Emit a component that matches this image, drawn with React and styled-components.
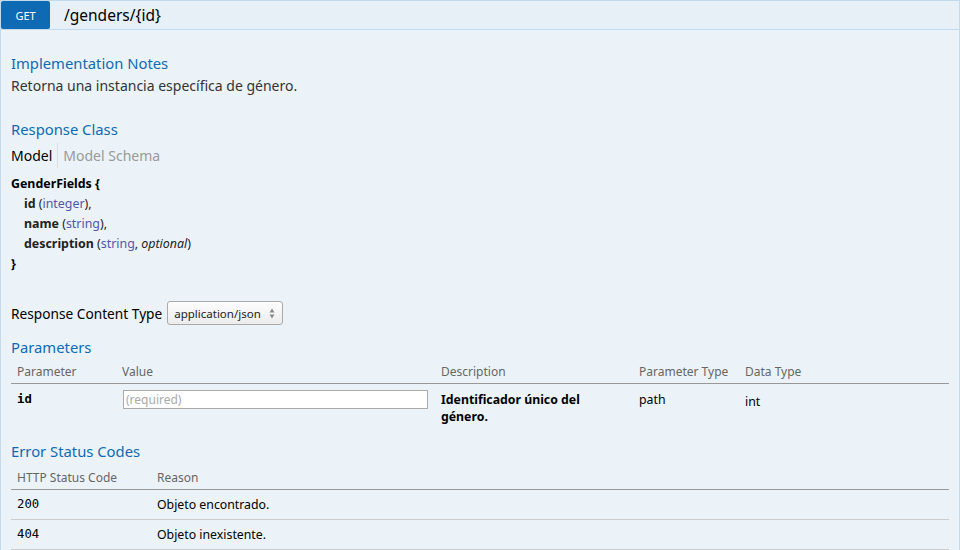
import React from 'react'
import styled, { createGlobalStyle } from 'styled-components'

const GlobalStyle = createGlobalStyle`
  html, body {
    margin: 0;
    padding: 0;
    background: #ffffff;
  }
  body {
    font-family: 'Noto Sans', 'Open Sans', sans-serif;
    color: #222;
  }
`

const Operation = styled.div`
  width: 960px;
  height: 550px;
  box-sizing: border-box;
  overflow: hidden;
  background: #ebf3f9;
  border: 1px solid #c3d9ec;
  border-bottom: none;
`

const Heading = styled.div`
  display: flex;
  align-items: center;
  height: 28px;
  background: #e7f0f7;
  border-bottom: 1px solid #c3d9ec;
`

const Method = styled.span`
  display: flex;
  align-items: center;
  justify-content: center;
  width: 49px;
  height: 28px;
  background: #0f6ab4;
  color: #fff;
  font-size: 11px;
  border-radius: 2px;
  text-transform: uppercase;
`

const Path = styled.span`
  margin-left: 14px;
  font-size: 15.5px;
  color: #000;
`

const Content = styled.div`
  padding: 0 10px;
`

const Title = styled.h4`
  margin: ${p => p.$top}px 0 ${p => p.$bottom || 0}px;
  font-size: 14.8px;
  line-height: 20px;
  font-weight: normal;
  color: #0f6ab4;
`

const Notes = styled.p`
  margin: 3px 0 0;
  font-size: 14px;
  line-height: 20px;
  color: #333;
`

const Tabs = styled.div`
  display: flex;
  margin-top: 4px;
`

const Tab = styled.span`
  font-size: 14px;
  line-height: 25px;
  padding: ${p => (p.$active ? '0 5px 0 0' : '0 0 0 5px')};
  color: ${p => (p.$active ? '#000' : '#999')};
  border-left: ${p => (p.$active ? 'none' : '1px solid #ddd')};
`

const Model = styled.div`
  margin-top: 6px;
  font-size: 12.4px;
  line-height: 20px;
  color: #222;
`

const ModelName = styled.div`
  font-weight: bold;
  color: #000;
`

const Prop = styled.div`
  padding-left: 13px;
  & b {
    color: #222;
  }
`

const PropType = styled.span`
  color: #55a;
`

const ContentTypeRow = styled.div`
  display: flex;
  align-items: center;
  margin-top: 27px;
  font-size: 13.7px;
  color: #000;
`

const Select = styled.div`
  display: flex;
  align-items: center;
  justify-content: space-between;
  box-sizing: border-box;
  width: 116px;
  height: 24px;
  margin-left: 5px;
  padding: 0 7px 0 6px;
  font-size: 11.5px;
  color: #222;
  background: linear-gradient(#fdfdfd, #ececec);
  border: 1px solid #aaa;
  border-radius: 3px;
`

const Table = styled.table`
  width: 100%;
  border-collapse: collapse;
  table-layout: fixed;
  margin-top: ${p => p.$top}px;
`

const Th = styled.th`
  text-align: left;
  font-weight: normal;
  font-size: 12px;
  color: #666;
  padding: 4px 6px 4px;
  line-height: 15px;
  border-bottom: 1px solid #999;
`

const Td = styled.td`
  vertical-align: top;
  padding: ${p => p.$pad || '7px 6px 6px'};
  font-size: 12.3px;
  line-height: 17px;
  color: #000;
  border-bottom: ${p => (p.$line ? '1px solid #ccc' : 'none')};
  font-family: ${p => (p.$code ? "'DejaVu Sans Mono', monospace" : 'inherit')};
  font-weight: ${p => (p.$bold ? 'bold' : 'normal')};
`

const Input = styled.input`
  box-sizing: border-box;
  width: 305px;
  height: 19px;
  margin: -1px 0 0 1px;
  padding: 0 2px;
  font-family: 'Noto Sans', sans-serif;
  font-size: 12px;
  border: 1px solid #aaa;
  background: #fff;
  &::placeholder {
    color: #aaa;
  }
`

const SelectArrows = () => (
  <svg width="6" height="11" viewBox="0 0 6 11">
    <path d="M3 0.5 L5.5 4.5 L0.5 4.5 Z" fill="#888" />
    <path d="M3 10.5 L5.5 6.5 L0.5 6.5 Z" fill="#888" />
  </svg>
)

const props = [
  { name: 'id', type: 'integer' },
  { name: 'name', type: 'string' },
  { name: 'description', type: 'string', optional: true }
]

const codes = [
  { code: '200', reason: 'Objeto encontrado.' },
  { code: '404', reason: 'Objeto inexistente.' }
]

const App = () => {
  return (
    <>
      <GlobalStyle />
      <Operation>
        <Heading>
          <Method>get</Method>
          <Path>/genders/{'{id}'}</Path>
        </Heading>
        <Content>
          <Title $top={23}>Implementation Notes</Title>
          <Notes>Retorna una instancia específica de género.</Notes>

          <Title $top={23}>Response Class</Title>
          <Tabs>
            <Tab $active>Model</Tab>
            <Tab>Model Schema</Tab>
          </Tabs>
          <Model>
            <ModelName>GenderFields {'{'}</ModelName>
            {props.map((p, i) => (
              <Prop key={p.name}>
                <b>{p.name}</b> (<PropType>{p.type}</PropType>
                {p.optional && <>, <i>optional</i></>})
                {i < props.length - 1 ? ',' : ''}
              </Prop>
            ))}
            <ModelName>{'}'}</ModelName>
          </Model>

          <ContentTypeRow>
            Response Content Type
            <Select>
              application/json
              <SelectArrows />
            </Select>
          </ContentTypeRow>

          <Title $top={12}>Parameters</Title>
          <Table $top={3}>
            <colgroup>
              <col style={{ width: 105 }} />
              <col style={{ width: 319 }} />
              <col style={{ width: 198 }} />
              <col style={{ width: 106 }} />
              <col />
            </colgroup>
            <thead>
              <tr>
                <Th>Parameter</Th>
                <Th>Value</Th>
                <Th>Description</Th>
                <Th>Parameter Type</Th>
                <Th>Data Type</Th>
              </tr>
            </thead>
            <tbody>
              <tr>
                <Td $code $bold>id</Td>
                <Td><Input placeholder="(required)" /></Td>
                <Td $bold $pad="7px 30px 6px 6px">Identificador único del género.</Td>
                <Td>path</Td>
                <Td $pad="9px 6px 5px">int</Td>
              </tr>
            </tbody>
          </Table>

          <Title $top={10}>Error Status Codes</Title>
          <Table $top={5}>
            <colgroup>
              <col style={{ width: 140 }} />
              <col />
            </colgroup>
            <thead>
              <tr>
                <Th>HTTP Status Code</Th>
                <Th>Reason</Th>
              </tr>
            </thead>
            <tbody>
              {codes.map(c => (
                <tr key={c.code}>
                  <Td $code $line $pad="6px 6px 6px">{c.code}</Td>
                  <Td $line $pad="6px 6px 6px">{c.reason}</Td>
                </tr>
              ))}
            </tbody>
          </Table>
        </Content>
      </Operation>
    </>
  )
}

export default App
